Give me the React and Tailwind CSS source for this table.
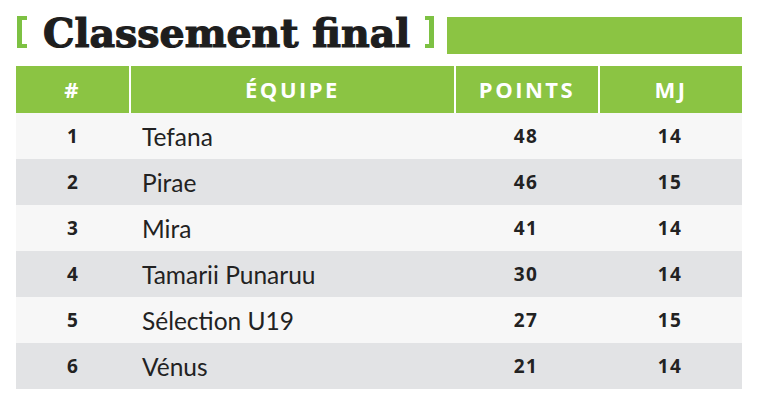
export default function App() {
  const rows = [
    ["1", "Tefana", "48", "14"],
    ["2", "Pirae", "46", "15"],
    ["3", "Mira", "41", "14"],
    ["4", "Tamarii Punaruu", "30", "14"],
    ["5", "Sélection U19", "27", "15"],
    ["6", "Vénus", "21", "14"],
  ];
  return (
    <div className="w-[759px] h-[410px] bg-white pl-[16px] pt-[17px]">
      <div className="flex items-start h-[37px] w-[726px]">
        <span aria-hidden="true" className="block ml-[1px] mt-[-1px] w-[10px] h-[32px] border-l-[5px] border-t-[4px] border-b-[4px] border-[#7dc143]"></span>
        <span className="ml-[16px] text-[#1e1e1e] text-[39.5px] leading-[40px] font-bold font-['DejaVu_Serif',serif] -mt-[4px] [-webkit-text-stroke:1.2px_#1e1e1e]">Classement final</span>
        <span aria-hidden="true" className="block ml-[15px] mt-[-1px] w-[9px] h-[32px] border-r-[5px] border-t-[4px] border-b-[4px] border-[#7dc143]"></span>
        <div className="flex-1 h-[37px] bg-[#8bc443] ml-[13px]"></div>
      </div>
      <div className="mt-[12px] w-[726px] font-['Lato',sans-serif]">
        <div className="grid grid-cols-[113px_325px_144px_144px] h-[47px] bg-[#8bc443] text-white font-bold font-['Open_Sans',sans-serif] text-[22px] tracking-[2.5px]">
          <div className="flex items-center justify-center">#</div>
          <div className="flex items-center justify-center border-l-2 border-white">ÉQUIPE</div>
          <div className="flex items-center justify-center border-l-2 border-white">POINTS</div>
          <div className="flex items-center justify-center border-l-2 border-white">MJ</div>
        </div>
        {rows.map((r, i) => (
          <div
            key={i}
            className={`grid grid-cols-[113px_325px_144px_144px] h-[46px] items-center text-[#222] ${i % 2 === 0 ? "bg-[#f7f7f7]" : "bg-[#e2e3e5]"}`}
          >
            <div className="text-center font-bold text-[19px] font-['Open_Sans',sans-serif]">{r[0]}</div>
            <div className="pl-[13px] text-[24.5px] pt-[2px]">{r[1]}</div>
            <div className="text-center font-bold text-[19px] tracking-[1.5px] font-['Open_Sans',sans-serif]">{r[2]}</div>
            <div className="text-center font-bold text-[19px] tracking-[1.5px] font-['Open_Sans',sans-serif]">{r[3]}</div>
          </div>
        ))}
      </div>
    </div>
  );
}
